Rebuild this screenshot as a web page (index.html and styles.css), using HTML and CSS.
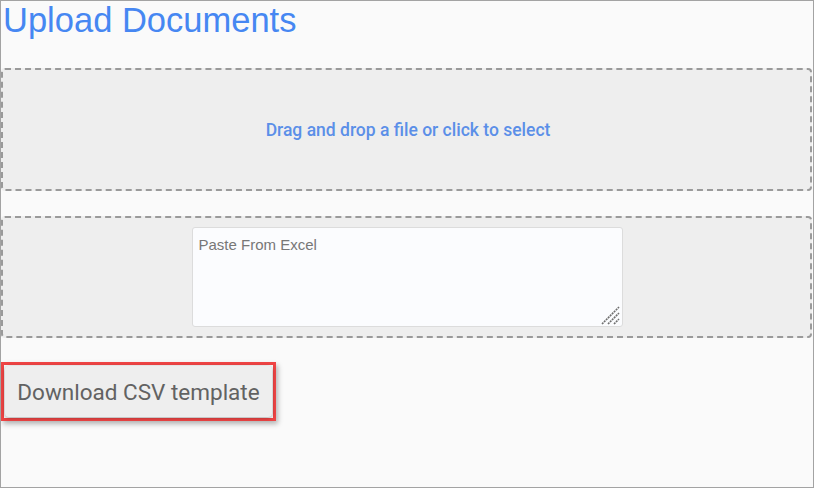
FILE: index.html
```html
<!DOCTYPE html>
<html>
<head>
<meta charset="utf-8">
<link rel="stylesheet" href="styles.css">
</head>
<body>
<div class="frame">
  <h1 class="title">Upload Documents</h1>
  <div class="dropzone drop-file">
    <span class="drop-text">Drag and drop a file or click to select</span>
  </div>
  <div class="dropzone drop-paste">
    <div class="paste-wrap">
      <textarea class="paste" placeholder="Paste From Excel"></textarea>
      <svg class="grip" width="20" height="20" viewBox="0 0 20 20">
        <path d="M1 19 L18 2 M7 19 L18 8 M13 19 L18 14" stroke="#707070" stroke-width="1.6" stroke-dasharray="2 0.8" fill="none"/>
      </svg>
    </div>
  </div>
  <div class="btn-wrap">
    <button class="btn">Download CSV template</button>
  </div>
</div>
</body>
</html>
```
FILE: styles.css
```css
html, body {
  margin: 0;
  padding: 0;
  background: #fafafa;
}
.frame {
  box-sizing: border-box;
  width: 814px;
  height: 488px;
  border: 1px solid #a3a3a3;
  background: #fafafa;
  display: flex;
  flex-direction: column;
  overflow: hidden;
}
.title {
  margin: 0;
  padding: 0 0 0 2px;
  font-family: "Liberation Sans", Arial, sans-serif;
  font-weight: normal;
  font-size: 34.5px;
  line-height: 39px;
  height: 67px;
  color: #4687f2;
}
.dropzone {
  box-sizing: border-box;
  width: 811px;
  border: 2px dashed #9a9a9a;
  border-radius: 4px;
  background: #eeeeee;
  display: flex;
  align-items: center;
  justify-content: center;
}
.drop-file {
  height: 123px;
}
.drop-text {
  font-family: Roboto, "Liberation Sans", sans-serif;
  font-weight: 500;
  font-size: 17.5px;
  color: #5b8fe8;
  margin-left: 3px;
  margin-top: 1px;
}
.drop-paste {
  margin-top: 25px;
  height: 122px;
}
.paste-wrap {
  position: relative;
  width: 431px;
  height: 100px;
  margin-left: 1px;
}
.paste {
  display: block;
  box-sizing: border-box;
  width: 431px;
  height: 100px;
  border: 1px solid #dcdcdc;
  border-radius: 3px;
  background: #fbfcfe;
  padding: 8px 6px;
  font-family: "Liberation Sans", Arial, sans-serif;
  font-size: 15px;
  resize: none;
  outline: none;
}
.paste::placeholder {
  color: #777777;
}
.grip {
  position: absolute;
  right: 2px;
  bottom: 2px;
}
.btn-wrap {
  margin-top: 24px;
  width: 267px;
  height: 51px;
  border: 3px solid #ef4444;
  padding: 1px;
  box-shadow: 2px 3px 5px rgba(0, 0, 0, 0.28);
}
.btn {
  width: 100%;
  height: 100%;
  border: none;
  border-radius: 4px;
  background: #eeeeee;
  box-shadow: 0 1px 4px rgba(0, 0, 0, 0.35);
  font-family: Roboto, "Liberation Sans", sans-serif;
  font-size: 22.5px;
  color: #626262;
  padding: 0;
  cursor: pointer;
}
```
